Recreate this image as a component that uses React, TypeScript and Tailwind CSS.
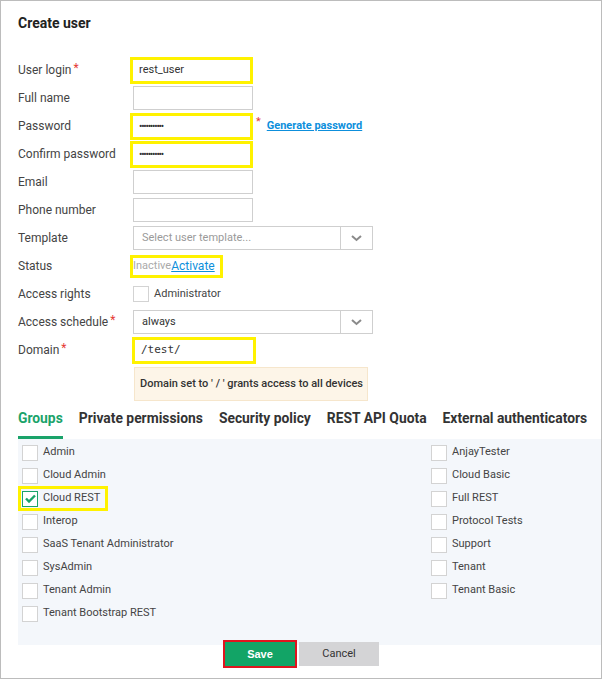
import React from "react";

const Y = "border-[3px] border-[#fff200]";

function Label({ text, req }: { text: string; req?: boolean }) {
  return (
    <div className="w-[115px] shrink-0 text-[12px] text-[#444]">
      {text}
      {req && <span className="text-[#e53935] ml-[2px] relative -top-[2px]">*</span>}
    </div>
  );
}

function Input() {
  return <div className="w-[120px] h-[24px] border border-[#cfcfcf] bg-white" />;
}

function HiInput({ children }: { children?: React.ReactNode }) {
  return (
    <div className={`-ml-[3px] w-[123px] h-[27px] ${Y} bg-white flex items-center pl-[6px] text-[11px] text-[#333]`}>
      {children}
    </div>
  );
}

function Chevron() {
  return (
    <svg width="11" height="7" viewBox="0 0 11 7">
      <path d="M1 1 L5.5 5 L10 1" fill="none" stroke="#8a8a8a" strokeWidth="2" />
    </svg>
  );
}

function Select({ text, placeholder }: { text: string; placeholder?: boolean }) {
  return (
    <div className="w-[240px] h-[24px] border border-[#cfcfcf] bg-white flex">
      <div className={`flex-1 flex items-center pl-[8px] text-[11px] ${placeholder ? "text-[#9a9a9a]" : "text-[#333]"}`}>{text}</div>
      <div className="w-[32px] border-l border-[#cfcfcf] flex items-center justify-center">
        <Chevron />
      </div>
    </div>
  );
}

function Row({ children }: { children: React.ReactNode }) {
  return <div className="h-[28px] flex items-center">{children}</div>;
}

function Box({ checked }: { checked?: boolean }) {
  return (
    <div className={`w-[16px] h-[16px] border bg-white flex items-center justify-center ${checked ? "border-[#1aa36a]" : "border-[#d3d3d3]"}`}>
      {checked && (
        <svg width="11" height="9" viewBox="0 0 11 9">
          <path d="M1 4.5 L4 7.5 L10 1.5" fill="none" stroke="#1aa36a" strokeWidth="2.4" />
        </svg>
      )}
    </div>
  );
}

function Group({ name, checked }: { name: string; checked?: boolean }) {
  if (checked) {
    return (
      <div className="h-[23px] flex items-center -ml-[4px]">
        <div className={`h-[25px] w-[90px] ${Y} flex items-center pl-[1px] gap-[5px]`}>
          <Box checked />
          <span className="text-[11px] text-[#444]">{name}</span>
        </div>
      </div>
    );
  }
  return (
    <div className="h-[23px] flex items-center gap-[5px]">
      <Box />
      <span className="text-[11px] text-[#444]">{name}</span>
    </div>
  );
}

function Dots() {
  return <span className="text-[10px] tracking-[-1.2px] text-[#333]">•••••••••••</span>;
}

export default function App() {
  const left = ["Admin", "Cloud Admin", "Cloud REST", "Interop", "SaaS Tenant Administrator", "SysAdmin", "Tenant Admin", "Tenant Bootstrap REST"];
  const right = ["AnjayTester", "Cloud Basic", "Full REST", "Protocol Tests", "Support", "Tenant", "Tenant Basic"];
  return (
    <div className="w-[602px] h-[679px] border border-[#bcbcbc] bg-white font-['Roboto',sans-serif] pl-[17px] overflow-hidden">
      <div className="pt-[12px] h-[55px] text-[14px] font-bold text-[#222] leading-[20px]">Create user</div>
      <Row>
        <Label text="User login" req />
        <HiInput>rest_user</HiInput>
      </Row>
      <Row>
        <Label text="Full name" />
        <Input />
      </Row>
      <Row>
        <Label text="Password" />
        <HiInput>
          <Dots />
        </HiInput>
        <span className="text-[#e53935] text-[11px] ml-[3px] relative -top-[4px]">*</span>
        <a className="ml-[6px] text-[11px] font-bold text-[#0d8fdc] underline">Generate password</a>
      </Row>
      <Row>
        <Label text="Confirm password" />
        <HiInput>
          <Dots />
        </HiInput>
      </Row>
      <Row>
        <Label text="Email" />
        <Input />
      </Row>
      <Row>
        <Label text="Phone number" />
        <Input />
      </Row>
      <Row>
        <Label text="Template" />
        <Select text="Select user template..." placeholder />
      </Row>
      <Row>
        <Label text="Status" />
        <div className={`-ml-[3px] h-[23px] w-[93px] ${Y} flex items-center`}>
          <span className="text-[11px] text-[#aaa]">Inactive</span>
          <a className="text-[12px] text-[#0d8fdc] underline">Activate</a>
        </div>
      </Row>
      <Row>
        <Label text="Access rights" />
        <div className="flex items-center gap-[5px]">
          <Box />
          <span className="text-[11px] text-[#444]">Administrator</span>
        </div>
      </Row>
      <Row>
        <Label text="Access schedule" req />
        <Select text="always" />
      </Row>
      <Row>
        <Label text="Domain" req />
        <div className={`-ml-[1px] w-[124px] h-[27px] ${Y} bg-white flex items-center pl-[6px] text-[11px] text-[#333] font-['DejaVu_Sans_Mono',monospace]`}>
          /test/
        </div>
      </Row>
      <div className="ml-[116px] mt-[3px] w-[234px] h-[34px] bg-[#fdf5e8] border border-[#f6e6cc] flex items-center pl-[5px] text-[11px] font-medium text-[#333]">
        Domain set to ' / ' grants access to all devices
      </div>
      <div className="flex gap-4 mt-[3px] text-[13.85px] font-bold text-[#333]">
        <div className="pt-[4px] pb-[8px] leading-[20px] border-b-[3px] border-[#1aa36a] text-[#1aa36a]">Groups</div>
        <div className="pt-[4px] pb-[8px] leading-[20px] border-b-[3px] border-transparent">Private permissions</div>
        <div className="pt-[4px] pb-[8px] leading-[20px] border-b-[3px] border-transparent">Security policy</div>
        <div className="pt-[4px] pb-[8px] leading-[20px] border-b-[3px] border-transparent">REST API Quota</div>
        <div className="pt-[4px] pb-[8px] leading-[20px] border-b-[3px] border-transparent whitespace-nowrap">External authenticators</div>
      </div>
      <div className="h-[206px] bg-[#f4f7fb] pl-[4px] pt-[2px] flex">
        <div className="w-[409px] flex flex-col">
          {left.map((n) => (
            <Group key={n} name={n} checked={n === "Cloud REST"} />
          ))}
        </div>
        <div className="flex flex-col">
          {right.map((n) => (
            <Group key={n} name={n} />
          ))}
        </div>
      </div>
      <div className="relative -mt-[5px] -ml-[17px] flex justify-center items-center gap-[2px]">
        <div className="w-[74px] h-[28px] border-[2px] border-[#e0141e] bg-[#12a466] flex items-center justify-center text-[11px] font-bold text-white font-['Liberation_Sans',sans-serif]">
          Save
        </div>
        <div className="w-[80px] h-[24px] bg-[#d4d4d6] flex items-center justify-center text-[11px] text-[#333]">Cancel</div>
      </div>
    </div>
  );
}
